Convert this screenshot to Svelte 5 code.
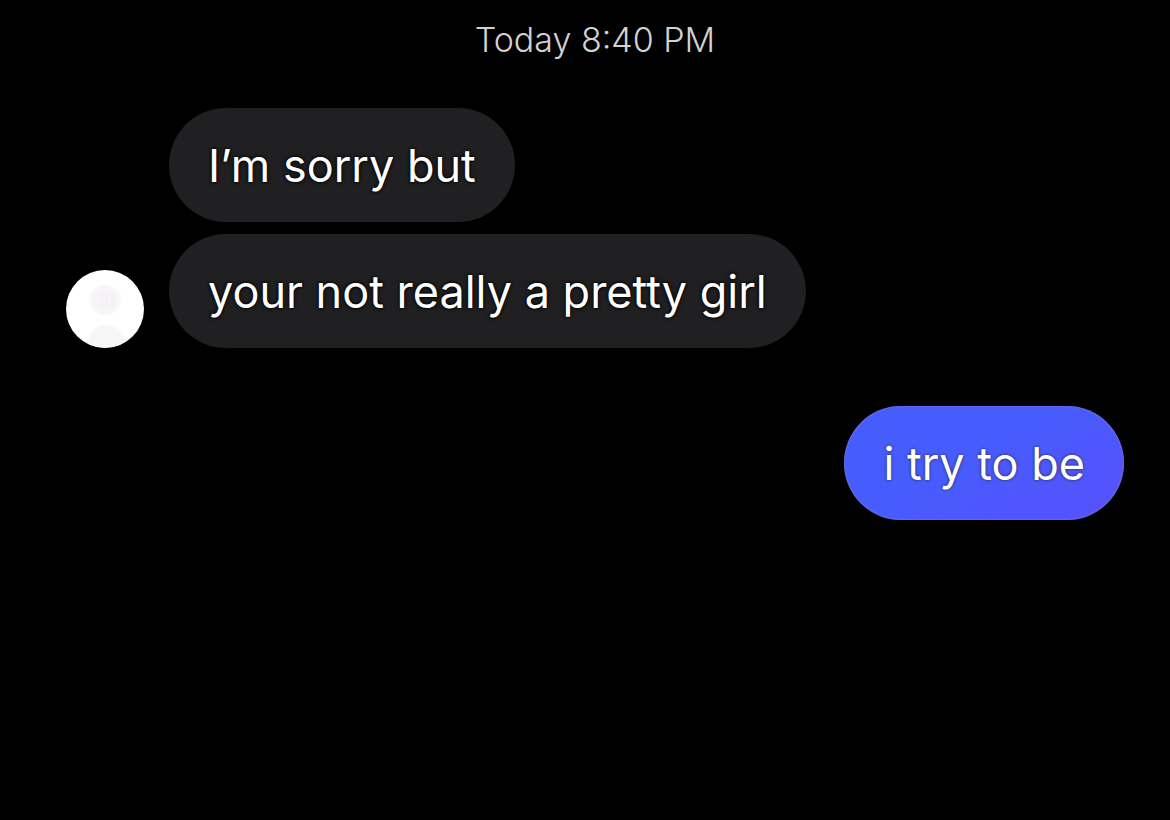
<script lang="ts">
  type Group = { from: "them" | "me"; messages: string[] };

  const time = "Today 8:40 PM";
  const groups: Group[] = [
    { from: "them", messages: ["I’m sorry but", "your not really a pretty girl"] },
    { from: "me", messages: ["i try to be"] },
  ];
</script>

<main class="chat">
  <time class="stamp">{time}</time>

  {#each groups as group}
    <section class="group {group.from}">
      {#if group.from === "them"}
        <svg class="avatar" viewBox="0 0 78 78" aria-hidden="true">
          <defs>
            <clipPath id="round"><circle cx="39" cy="39" r="39" /></clipPath>
            <filter id="soft"><feGaussianBlur stdDeviation="0.8" /></filter>
          </defs>
          <g clip-path="url(#round)">
            <rect width="78" height="78" fill="#fff" />
            <g filter="url(#soft)">
              <path d="M39 14l11 5q5 3 4 10l-1 8q-5 7-13 8-9-1-14-7l-2-9q0-7 5-10z" fill="#f7f5f7" />
              <path d="M36 23v15M41 22v16M46 23v14" stroke="#f2f0f2" stroke-width="2" />
              <path d="M21 74q3-12 10-17 9-4 18 0 8 5 11 15-8 6-21 6-12 0-18-4z" fill="#f7f5f7" />
            </g>
          </g>
        </svg>
      {/if}
      <div class="bubbles">
        {#each group.messages as text}
          <p class="bubble">{text}</p>
        {/each}
      </div>
    </section>
  {/each}
</main>

<style>
  :global(body) {
    background: #000;
  }
  .chat {
    display: flex;
    flex-direction: column;
    gap: 58px;
    padding: 20px 46px 40px 66px;
    font-family: Inter, "Liberation Sans", sans-serif;
    color: #fff;
  }
  .stamp {
    align-self: center;
    margin-bottom: -10px;
    font-size: 34px;
    line-height: 40px;
    font-weight: 300;
    color: #d2d2d4;
  }
  .group {
    display: flex;
    align-items: flex-end;
    gap: 25px;
  }
  .me {
    justify-content: flex-end;
  }
  .avatar {
    flex: none;
    width: 78px;
    height: 78px;
  }
  .bubbles {
    display: flex;
    flex-direction: column;
    align-items: flex-start;
    gap: 12px;
  }
  .bubble {
    margin: 0;
    padding: 30px 39px 28px;
    border-radius: 57px;
    background: #201f21;
    font-size: 45px;
    line-height: 56px;
    text-shadow: 0 0 2px #000, 0 0 4px #000;
  }
  .me .bubble {
    background: linear-gradient(150deg, #475cfc 45%, #5850fb);
    box-shadow: inset 0 0 2px #9a8fd0;
    text-shadow: 0 0 3px #223;
  }
</style>
